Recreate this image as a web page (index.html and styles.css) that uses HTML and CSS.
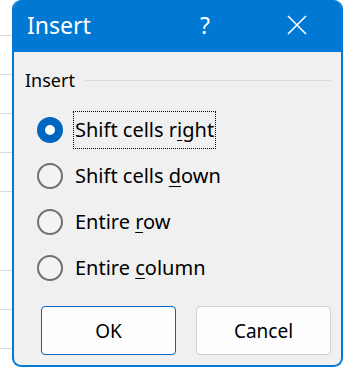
FILE: index.html
```html
<!DOCTYPE html>
<html lang="en">
<head>
    <meta charset="UTF-8">
    <title>Insert</title>
    <link rel="stylesheet" href="styles.css">
</head>
<body>

    <div class="dialog">
        <!-- Title bar -->
        <div class="titlebar">
            <span class="title">Insert</span>
            <span class="help">?</span>
            <span class="close">
                <svg width="20" height="20" viewBox="0 0 20 20">
                    <path d="M1 1 L19 19 M19 1 L1 19" stroke="#fff" stroke-width="1.6" fill="none"/>
                </svg>
            </span>
        </div>

        <div class="content">
            <!-- Group box -->
            <div class="group-head">
                <span class="group-label">Insert</span>
                <span class="group-line"></span>
            </div>

            <div class="options">
                <label class="option">
                    <span class="radio checked"></span>
                    <span class="text focused">Shift cells r<u>i</u>ght</span>
                </label>
                <label class="option">
                    <span class="radio"></span>
                    <span class="text">Shift cells <u>d</u>own</span>
                </label>
                <label class="option">
                    <span class="radio"></span>
                    <span class="text">Entire <u>r</u>ow</span>
                </label>
                <label class="option">
                    <span class="radio"></span>
                    <span class="text">Entire <u>c</u>olumn</span>
                </label>
            </div>

            <div class="buttons">
                <button class="btn primary">OK</button>
                <button class="btn">Cancel</button>
            </div>
        </div>
    </div>

</body>
</html>
```

FILE: styles.css
```css
/* Basic Reset */
* {
    margin: 0;
    padding: 0;
    box-sizing: border-box;
}

body {
    font-family: 'Noto Sans', 'Open Sans', sans-serif;
    color: #000;
    width: 343px;
    height: 368px;
    overflow: hidden;
    /* spreadsheet grid peeking out behind the dialog */
    background-color: #fff;
    background-image: repeating-linear-gradient(
        to bottom,
        transparent 0,
        transparent 35px,
        #dadada 35px,
        #dadada 36px,
        transparent 36px,
        transparent 39.1px
    );
}

/* Dialog window */
.dialog {
    margin-left: 12px;
    width: 331px;
    height: 367px;
    background: #f0f0f0;
    border: 2px solid #0078d4;
    border-top: none;
    border-radius: 9px;
    overflow: hidden;
    display: flex;
    flex-direction: column;
}

/* Title bar */
.titlebar {
    height: 52px;
    background: #0078d4;
    color: #fff;
    display: flex;
    align-items: center;
    padding-left: 13px;
    margin: 0 -2px;
    padding-right: 36px;
}

.title {
    font-size: 23px;
    flex: 1;
    padding-left: 2px;
    padding-bottom: 2px;
}

.help {
    font-size: 23px;
    margin-right: 77px;
    padding-bottom: 2px;
}

.close {
    display: flex;
    margin-top: -2px;
}

/* Content area */
.content {
    flex: 1;
    padding: 16px 10px 10px 11px;
    display: flex;
    flex-direction: column;
}

.group-head {
    display: flex;
    align-items: center;
    height: 24px;
}

.group-label {
    font-size: 18px;
    line-height: 24px;
    margin-right: 10px;
}

.group-line {
    flex: 1;
    height: 1px;
    background: #d9d9d9;
    margin-top: 1px;
}

.options {
    display: flex;
    flex-direction: column;
    margin-top: 15px;
    padding-left: 12px;
}

.option {
    display: flex;
    align-items: center;
    height: 46px;
}

.radio {
    width: 26px;
    height: 26px;
    border-radius: 50%;
    border: 2px solid #707070;
    background: #f3f3f3;
    margin-right: 10px;
    flex-shrink: 0;
}

.radio.checked {
    border: 8.5px solid #0067c0;
    background: #fff;
}

.text {
    font-size: 20px;
    line-height: 36px;
    padding: 0 1px;
    border: 1px dotted transparent;
}

.text u {
    text-underline-offset: 3px;
    text-decoration-thickness: 1px;
}

.text.focused {
    border-color: #000;
}

/* Button row */
.buttons {
    display: flex;
    justify-content: flex-end;
    gap: 20px;
    margin-top: auto;
}

.btn {
    width: 135px;
    height: 49px;
    font-family: inherit;
    font-size: 19px;
    color: #000;
    background: #fdfdfd;
    border: 1px solid #d0d0d0;
    border-radius: 4px;
}

.btn.primary {
    border-color: #0067c0;
}
```
